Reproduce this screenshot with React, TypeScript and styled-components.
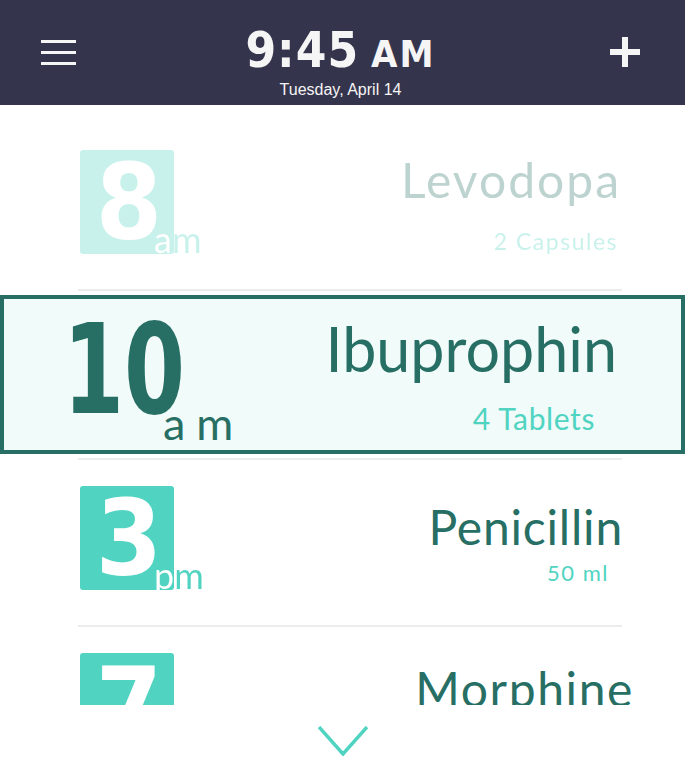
import React from "react";
import styled, { createGlobalStyle, css } from "styled-components";

const GREEN = "#276f64";
const TEAL = "#50d4c1";
const NAVY = "#35344d";

const Global = createGlobalStyle`
  html, body { margin: 0; padding: 0; background: #fff; }
  body { font-family: Lato, "Open Sans", sans-serif; }
  * { box-sizing: border-box; }
`;

const Screen = styled.div`
  width: 685px;
  height: 771px;
  display: flex;
  flex-direction: column;
  overflow: hidden;
  background: #fff;
`;

const Header = styled.header`
  flex: none;
  height: 105px;
  background: ${NAVY};
  color: #f5f5f5;
  display: grid;
  grid-template-columns: 1fr auto 1fr;
  align-items: start;
  padding: 0 45px 0 41px;
`;

const IconButton = styled.button<{ $top: number; $end?: boolean }>`
  background: none;
  border: 0;
  padding: 0;
  margin-top: ${(p) => p.$top}px;
  justify-self: ${(p) => (p.$end ? "end" : "start")};
  color: #f5f5f5;
  display: block;
  line-height: 0;
  cursor: pointer;
`;

const Clock = styled.div`
  display: flex;
  flex-direction: column;
  align-items: center;
  padding-top: 26px;
`;

const Time = styled.div`
  font-family: "DejaVu Sans Condensed", "DejaVu Sans", sans-serif;
  font-stretch: condensed;
  font-weight: 700;
  font-size: 49px;
  line-height: 49px;
  letter-spacing: 1px;
  white-space: nowrap;
`;

const Meridiem = styled.span`
  font-size: 38px;
  letter-spacing: 2px;
  margin-left: 12px;
`;

const DateLine = styled.div`
  font-family: "Liberation Sans", Arial, sans-serif;
  font-size: 16px;
  line-height: 16px;
  margin-top: 3px;
  white-space: nowrap;
`;

const Viewport = styled.div`
  height: 600px;
  flex: none;
  overflow: hidden;
  padding-top: 19px;
`;

const Divider = styled.div`
  height: 2px;
  background: #ececec;
  margin: 0 63px 0 78px;
`;

const Row = styled.div<{ $past?: boolean }>`
  height: 165px;
  display: flex;
  align-items: flex-start;
  padding-left: 80px;
  opacity: ${(p) => (p.$past ? 0.3 : 1)};
`;

const CurrentRow = styled.div`
  height: 159px;
  margin: 4px 0;
  border: 4px solid ${GREEN};
  background: #f1fbf9;
  display: flex;
  align-items: flex-start;
`;

const Badge = styled.div`
  position: relative;
  flex: none;
  width: 94px;
  height: 104px;
  margin-top: 26px;
  border-radius: 3px;
  background: ${TEAL};
  color: #fff;
  display: flex;
  justify-content: center;
`;

const BadgeDigit = styled.span`
  font-family: "DejaVu Sans Condensed", "DejaVu Sans", sans-serif;
  font-stretch: condensed;
  font-weight: 700;
  font-size: 106px;
  line-height: 106px;
  margin-left: 4px;
`;

const BadgeSuffix = styled.span`
  position: absolute;
  left: 74px;
  top: 71px;
  font-family: Lato, sans-serif;
  font-size: 36px;
  line-height: 36px;
  background: linear-gradient(90deg, #fff 0 20px, ${TEAL} 20px);
  -webkit-background-clip: text;
  background-clip: text;
  color: transparent;
`;

const BigTime = styled.div`
  position: relative;
  flex: none;
  margin: 8px 0 0 59px;
  color: ${GREEN};
`;

const BigDigits = styled.span`
  display: block;
  font-family: "DejaVu Sans Condensed", "DejaVu Sans", sans-serif;
  font-stretch: condensed;
  font-weight: 700;
  font-size: 125px;
  line-height: 125px;
  transform: scaleX(0.78);
  transform-origin: left center;
`;

const BigSuffix = styled.span`
  position: absolute;
  left: 100px;
  top: 94px;
  font-family: Lato, sans-serif;
  font-size: 45px;
  line-height: 45px;
  letter-spacing: 11px;
`;

const Info = styled.div<{ $pad: number; $right: number }>`
  flex: 1;
  display: flex;
  flex-direction: column;
  align-items: flex-end;
  padding-top: ${(p) => p.$pad}px;
  padding-right: ${(p) => p.$right}px;
`;

const Name = styled.div<{ $big?: boolean; $track: number }>`
  font-family: Lato, sans-serif;
  color: ${GREEN};
  white-space: nowrap;
  letter-spacing: ${(p) => p.$track}px;
  ${(p) =>
    p.$big
      ? css`
          font-size: 61px;
          line-height: 61px;
        `
      : css`
          font-size: 48px;
          line-height: 48px;
        `}
`;

const Dose = styled.div<{ $gap: number; $shift: number; $size: number; $track: number }>`
  font-family: Lato, sans-serif;
  color: ${TEAL};
  white-space: nowrap;
  font-size: ${(p) => p.$size}px;
  line-height: ${(p) => p.$size}px;
  letter-spacing: ${(p) => p.$track}px;
  margin-top: ${(p) => p.$gap}px;
  margin-right: ${(p) => p.$shift}px;
`;

const Footer = styled.div`
  flex: 1;
  display: flex;
  justify-content: center;
  padding-top: 21px;
`;

type Med = {
  hour: string;
  period: string;
  name: string;
  dose: string;
  state: "past" | "current" | "upcoming";
  pad: number;
  gap: number;
  right: number;
  shift: number;
  doseSize: number;
  track: number;
  doseTrack: number;
};

const meds: Med[] = [
  { hour: "8", period: "am", name: "Levodopa", dose: "2 Capsules", state: "past", pad: 32, gap: 26, right: 64, shift: 3, doseSize: 23, track: 2, doseTrack: 1.5 },
  { hour: "10", period: "am", name: "Ibuprophin", dose: "4 Tablets", state: "current", pad: 19, gap: 24, right: 64, shift: 22, doseSize: 30, track: 0, doseTrack: 0.6 },
  { hour: "3", period: "pm", name: "Penicillin", dose: "50 ml", state: "upcoming", pad: 43, gap: 11, right: 62, shift: 14, doseSize: 22, track: 0.8, doseTrack: 1.5 },
  { hour: "7", period: "pm", name: "Morphine", dose: "1 Tablet", state: "upcoming", pad: 38, gap: 12, right: 51, shift: 0, doseSize: 22, track: 1.6, doseTrack: 1.5 },
];

const MenuIcon = () => (
  <svg width="35" height="25" viewBox="0 0 35 25">
    <rect x="0" y="0" width="35" height="3" fill="currentColor" />
    <rect x="0" y="11" width="35" height="3" fill="currentColor" />
    <rect x="0" y="22" width="35" height="3" fill="currentColor" />
  </svg>
);

const PlusIcon = () => (
  <svg width="30" height="30" viewBox="0 0 30 30">
    <rect x="12" y="0" width="6" height="30" fill="currentColor" />
    <rect x="0" y="12" width="30" height="6" fill="currentColor" />
  </svg>
);

const Chevron = () => (
  <svg width="50" height="30" viewBox="0 0 50 30">
    <polyline points="1,1 25,28 49,1" fill="none" stroke={TEAL} strokeWidth="3.5" />
  </svg>
);

const MedInfo = ({ m }: { m: Med }) => (
  <Info $pad={m.pad} $right={m.right}>
    <Name $big={m.state === "current"} $track={m.track}>
      {m.name}
    </Name>
    <Dose $gap={m.gap} $shift={m.shift} $size={m.doseSize} $track={m.doseTrack}>
      {m.dose}
    </Dose>
  </Info>
);

export default function App() {
  return (
    <Screen>
      <Global />
      <Header>
        <IconButton $top={40} aria-label="Menu">
          <MenuIcon />
        </IconButton>
        <Clock>
          <Time>
            9:45<Meridiem>AM</Meridiem>
          </Time>
          <DateLine>Tuesday, April 14</DateLine>
        </Clock>
        <IconButton $top={37} $end aria-label="Add">
          <PlusIcon />
        </IconButton>
      </Header>
      <Viewport>
        {meds.map((m, i) => (
          <React.Fragment key={m.name}>
            {m.state === "current" ? (
              <CurrentRow>
                <BigTime>
                  <BigDigits>{m.hour}</BigDigits>
                  <BigSuffix>{m.period}</BigSuffix>
                </BigTime>
                <MedInfo m={m} />
              </CurrentRow>
            ) : (
              <Row $past={m.state === "past"}>
                <Badge>
                  <BadgeDigit>{m.hour}</BadgeDigit>
                  <BadgeSuffix>{m.period}</BadgeSuffix>
                </Badge>
                <MedInfo m={m} />
              </Row>
            )}
            {i < meds.length - 1 && <Divider />}
          </React.Fragment>
        ))}
      </Viewport>
      <Footer>
        <Chevron />
      </Footer>
    </Screen>
  );
}
